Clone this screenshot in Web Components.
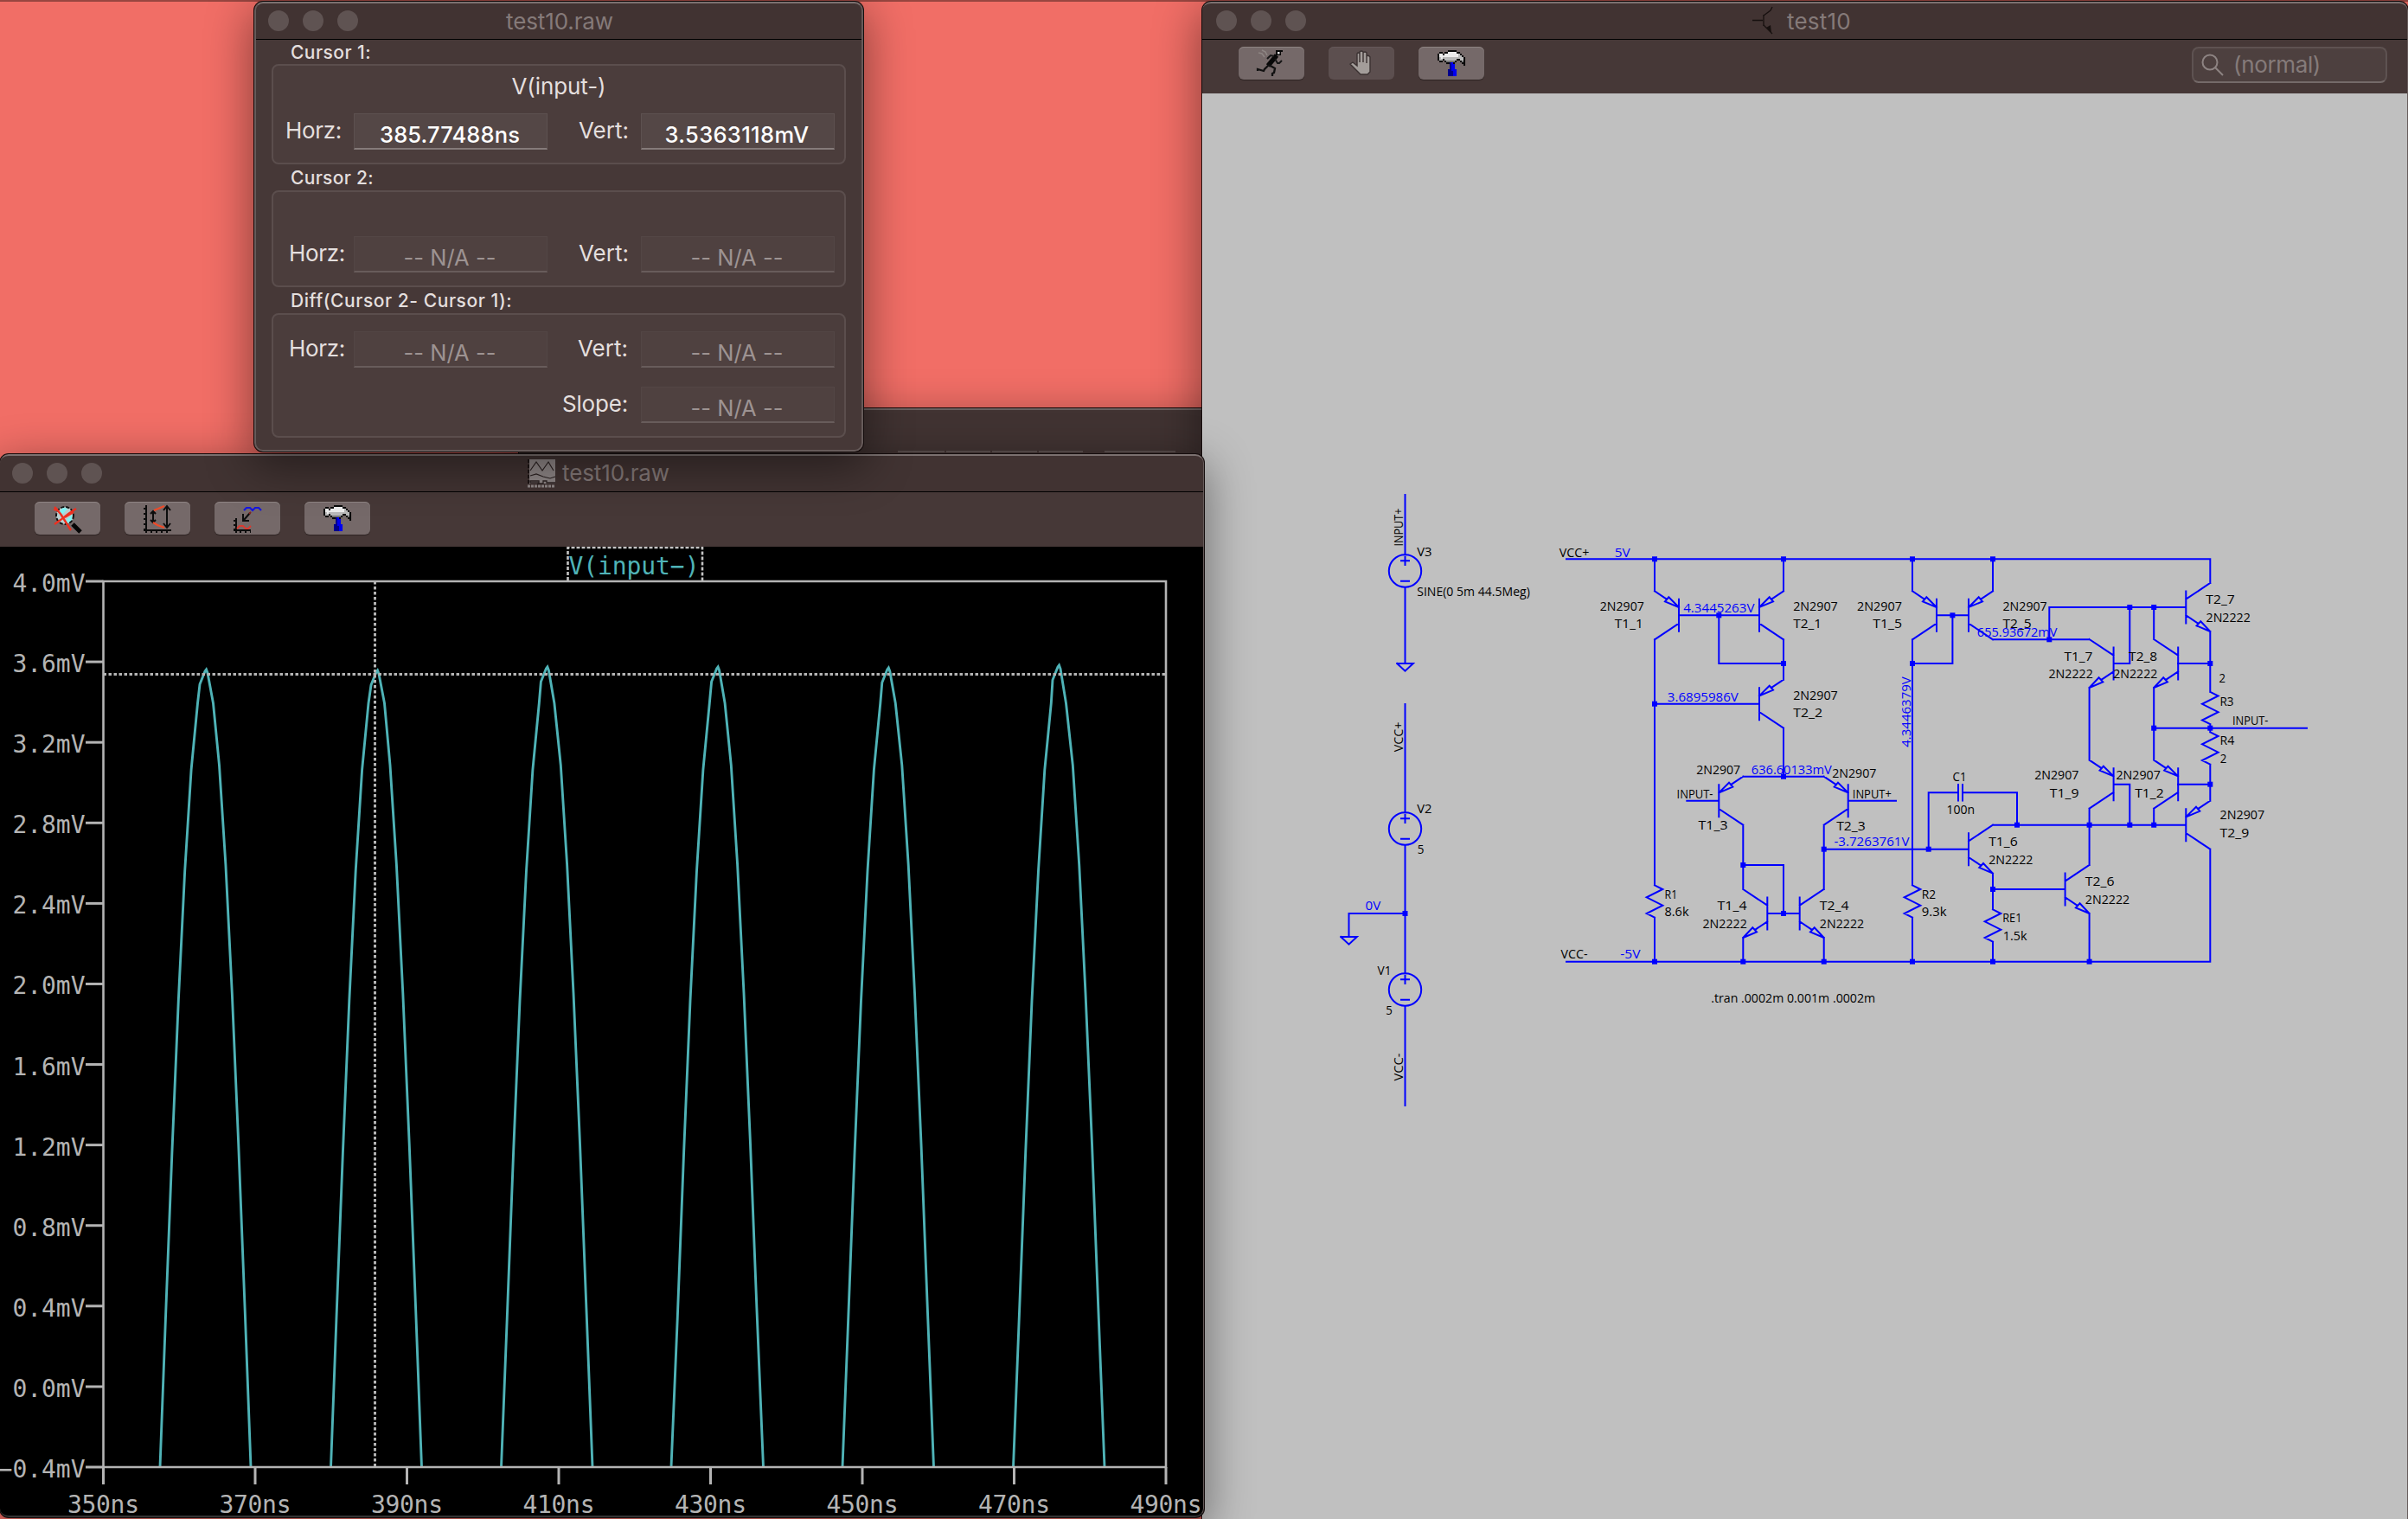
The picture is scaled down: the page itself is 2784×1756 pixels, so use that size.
<!DOCTYPE html>
<html lang="en">
<head>
<meta charset="utf-8">
<title>test10</title>
<style>
html,body{margin:0;height:100%;overflow:hidden;background:#f16e66}
</style>
</head>
<body>
<spice-desktop></spice-desktop>
<script>
const UI = 'Inter,"Liberation Sans",sans-serif';
function define(name, css, html, setup) {
  customElements.define(name, class extends HTMLElement {
    connectedCallback() {
      if (this.shadowRoot) return;
      const root = this.attachShadow({ mode: 'open' });
      root.innerHTML = `<style>*{box-sizing:border-box}${css}</style>` + (typeof html === 'function' ? html(this) : html);
      if (setup) setup(this, root);
    }
  });
}

/* Text spaced to an exact advance width */
define('fit-text', `:host{display:inline-block;white-space:pre}span{display:inline-block}`,
  el => `<span>${el.getAttribute('text')}</span>`,
  (el, root) => {
    const s = root.querySelector('span'), w = +el.getAttribute('w');
    el.style.width = w + 'px';
    const natural = s.getBoundingClientRect().width;
    if (natural) s.style.letterSpacing = ((w - natural) / el.getAttribute('text').length) + 'px';
  });

/* Icons */
const HAMMER = [
'......KKKKK.....','.KK.KKWWWWWKK...','KWWKWWWWWWWWGK..','KWWWWWWWWWWWGGK.','KGWGGGGGGGGGGGGK','KGGKGGGGGGGKKGGK',
'.KK.KDDDDDK..KDK','.....KKNBK....KK','.......NBB.....K','.......NBB......','.......NBB......','......NNBBB.....','......NNNBB.....','......NNNBB.....','......NNNBB.....'];
const PAL = {K:'#0a0a0a',W:'#ececec',G:'#b9b9b9',D:'#777',N:'#00008c',B:'#0000f0'};
const pixels = rows => rows.map((r,y)=>[...r].map((c,x)=>PAL[c]?`<rect x="${x*2}" y="${y*2}" width="2.05" height="2.05" fill="${PAL[c]}"/>`:'').join('')).join('');
const S = (d,c='#0c0c0c',w=2,extra='') => `<path d="${d}" fill="none" stroke="${c}" stroke-width="${w}" ${extra}/>`;
const ICONS = {
  hammer: pixels(HAMMER),
  zoom: `<circle cx="13" cy="12" r="10" fill="#b9cfd0" stroke="#111" stroke-width="2" stroke-dasharray="4 2"/><path d="M6 8l5-5 5 1-8 9zM15 17l6-6v6l-5 4z" fill="#7ff5f5"/>`
    + S('M22 22L31 31','#050505',5) + S('M1 2l3 3M2 3L8 10L20 29','#ee3020',2.4) + S('M1 22L8 17L17 10L26 4M0 5l5 1M13 14l10-6','#ee3020',2.2),
  axes: S('M3 0V32M0 29H32') + S('M1 3V29','#0c0c0c',2,'stroke-dasharray="2 4"') + S('M8 31H32','#0c0c0c',2,'stroke-dasharray="2 4"')
    + S('M11 7V20M8 10l3-3l3 3M8 17l3 3l3-3M27 1V26M23 6l4-5l4 5M23 21l4 5l4-5') + S('M12 6L17 4L24 1M11 20L16 23L24 26','#ee4a28',2.2),
  drop: S('M12 6L15 3H19L22 6L25 3H29L32 6','#1616e0',2.2) + S('M19 9L12 17M11 10V18H18') + S('M18 10l2-2','#802020')
    + S('M3 15V32M0 29H20') + S('M1 17V29','#0c0c0c',2,'stroke-dasharray="2 3"') + S('M7 31H20','#0c0c0c',2,'stroke-dasharray="2 4"') + S('M4 27L7 24H11L14 27H17L20 24','#d83a30',2),
  run: `<path d="M21 0H29V2H27V6H21z" fill="#080808"/><rect x="23" y="2" width="2.5" height="2.5" fill="#ddd"/>` + S('M22 6L12 18','#080808',5.5) + S('M20 10L23 15H25L28 12M19 7L15 6L11 10','#161616',2)
    + S('M13 17L8 22L7 24L0 22V24M13 17L20 21L19 26L17 27V30','#111',2.3) + S('M1 3L5 4L8 8M5 0L9 2L11 6','#8d8583',1.6),
  hand: `<path d="M9 25L0 16L3 14L8 18V4Q9 2 11 4V14V2Q13 0 15 2V14V3Q17 1 19 3V15V7Q21 5 23 8V25L20 28H12z" fill="#a39d9a" stroke="#3b3232" stroke-width="1.4"/>`,
  bjt: S('M0 15.500H12M13 9V22','#17100f',1.3) + S('M13 10L21 4L23 0M13 21L20 28L23 31','#17100f',1.3) + `<path d="M22 30L16 24L21 21z" fill="#17100f"/>`,
  doc: `<rect x="2" width="30" height="28" fill="#8f8787"/>` + S('M1 0V32','#1c1414',2,'stroke-dasharray="4 2"') + S('M3 13L10 3L17 13L24 3L30 13M3 19L10 17L18 20L26 22L32 20','#2c2222',1.2)
    + S('M3 27H12V30M3 27V25H13V28H18V25H22V27H32','#2c2222',1.3) + S('M0 31H32','#8f8787',3,'stroke-dasharray="3 1"'),
  search: `<circle cx="10" cy="10" r="8.500" fill="none" stroke="#8d8382" stroke-width="2"/>` + S('M16 16L25 25','#8d8382',2)
};
define('tool-icon', `:host{display:block;width:32px;height:32px}svg{display:block;overflow:visible}`,
  el => `<svg width="32" height="32" viewBox="0 0 32 32">${ICONS[el.getAttribute('name')]}</svg>`);

define('tool-button', `:host{display:flex;width:76px;height:38px;border-radius:6px;background:#756969;box-shadow:inset 0 1px 0 #8e8483,0 1px 1px rgba(0,0,0,.35);justify-content:center;padding-top:4px}
:host([off]){background:#5c4f4f;box-shadow:inset 0 1px 0 #655959}
:host([icon=hand]) tool-icon{width:26px}`,
  el => `<tool-icon name="${el.getAttribute('icon')}"></tool-icon>`);

define('tool-strip', `:host{display:flex;gap:28px;background:#463837;align-items:flex-start}.sp{flex:1}`, `<slot></slot><div class="sp"></div><slot name="end"></slot>`);

define('search-box', `:host{display:flex;width:226px;height:42px;border-radius:8px;background:#4d403f;border:2px solid #5e5251;border-bottom-color:#746a69;padding:0 0 0 9px;gap:5px;align-items:center;color:#857b7a;font:26px/38px ${UI}}tool-icon{margin-top:6px}`,
  `<tool-icon name="search"></tool-icon><fit-text text="(normal)" w="101"></fit-text>`);

/* Window frame with title bar */
define('app-window', `:host{display:flex;flex-direction:column;position:absolute;border-radius:10px;overflow:hidden;background:#463837;box-shadow:0 0 0 1px #140c0c,0 14px 52px 4px rgba(0,0,0,.42)}
.bar{height:44px;flex:none;display:grid;grid-template-columns:1fr auto 1fr;align-items:center;background:#413332;border-bottom:1px solid #000;color:#857a79;font:26px/42px ${UI}}
.lights{display:flex;gap:16px;padding-left:var(--lights,16px)}.lights i{width:24px;height:24px;border-radius:50%;background:#5f5352}
.title{display:flex;gap:8px;align-items:center;position:relative;left:var(--shift,1px)}
.title fit-text{padding-top:var(--drop,2px)}
.rim{position:absolute;inset:0;border-radius:10px;border:2px solid #665b5a;border-top-color:#7b7170;pointer-events:none}
:host([flat]) .rim{border-width:2px 1px 2px 0;border-bottom-color:#333}
slot{display:contents}`,
  el => `<div class="bar"><div class="lights"><i></i><i></i><i></i></div><div class="title">${el.getAttribute('icon')?`<tool-icon name="${el.getAttribute('icon')}"></tool-icon>`:''}<fit-text text="${el.getAttribute('heading')}" w="${el.getAttribute('tw')}"></fit-text></div><div></div></div><slot></slot><div class="rim"></div>`);

/* Cursor readout */
define('value-field', `:host{display:block;width:224px;height:42px;background:#544746;border:1px solid #5d5150;border-bottom:2px solid #857b7a;text-align:center;color:#fff;font:500 25.5px/41px ${UI};padding:3px 2px 0 0}
:host([off]){background:#4f4140;border-color:#534645;border-bottom-color:#685c5b;color:#9d9392;font-weight:400}`,
  el => `<fit-text text="${el.getAttribute('value')}" w="${el.getAttribute('w')}"></fit-text>`);
define('field-label', `:host{display:block;height:42px;text-align:right;color:#e4dfde;font:26px/40px ${UI}}`,
  el => `<fit-text text="${el.getAttribute('text')}" w="${el.getAttribute('w')}"></fit-text>`);
define('readout-row', `:host{display:flex;height:42px}field-label.a{width:93px;padding-right:var(--pa,10px)}field-label.b{width:108px;padding-right:var(--pb,14px)}.gap{width:317px}`,
  el => {
    const g = n => el.getAttribute(n), off = g('h') === '385.77488ns' ? '' : 'off';
    const first = g('h') ? `<field-label class="a" text="Horz:" w="65"></field-label><value-field ${off} value="${g('h')}" w="${g('hw')}"></value-field>` : '<div class="gap"></div>';
    return first + `<field-label class="b" text="${g('l')||'Vert:'}" w="${g('lw')||58}"></field-label><value-field ${off} value="${g('v')}" w="${g('vw')}"></value-field>`;
  });
define('readout-group', `:host{display:block;margin:0 20px}.cap{height:var(--cap,30px);padding:1px 0 0 22px;color:#e4dfde;font:500 21px/var(--cap,30px) ${UI}}
.box{height:var(--h);border:2px solid #5b4e4d;border-radius:8px;background:#4b3d3c;padding-top:var(--pt);display:flex;flex-direction:column}`,
  el => `<div class="cap"><fit-text text="${el.getAttribute('caption')}" w="${el.getAttribute('w')}"></fit-text></div><div class="box"><slot></slot></div>`);
define('cursor-panel', `:host{display:block}.trace{height:55px;text-align:center;color:#e4dfde;font:26px/47px ${UI}}`,
 `<readout-group caption="Cursor 1:" w="93" style="--cap:28px;--h:116px;--pt:0"><div class="trace"><fit-text text="V(input-)" w="109"></fit-text></div><readout-row h="385.77488ns" hw="162" v="3.5363118mV" vw="167" style="--pa:14px"></readout-row></readout-group>
  <readout-group caption="Cursor 2:" w="96" style="--h:112px;--pt:51px"><readout-row h="-- N/A --" hw="107" v="-- N/A --" vw="107"></readout-row></readout-group>
  <readout-group caption="Diff(Cursor 2- Cursor 1):" w="256" style="--h:144px;--pt:19px"><readout-row h="-- N/A --" hw="107" v="-- N/A --" vw="107" style="--pb:15px"></readout-row><readout-row l="Slope:" lw="76" v="-- N/A --" vw="107" style="--pb:15px;margin-top:22px"></readout-row></readout-group>`);

/* Waveform plot; drawing coordinates are screen pixels */
define('wave-plot', `:host{display:block;flex:1;background:#000}svg{display:block}text{font-family:"DejaVu Sans Mono",monospace;font-size:28px;fill:#b4b4b4}`, () => {
  const L=119.5,R=1348,T=672,B=1696; let o='';
  const ln=(x1,y1,x2,y2,w=2,e='')=>`<path d="M${x1} ${y1}L${x2} ${y2}" stroke="#b4b4b4" stroke-width="${w}" ${e}/>`;
  for(let i=0;i<12;i++){const y=T+(B-T)/11*i;o+=ln(99,y,L,y,3);
    const s=(4-.4*i).toFixed(1), t=(i===11?'−0.4':s.replace('-',''))+'mV';
    o+=`<text x="98.500" y="${y+12}" text-anchor="end" textLength="${t.length*16.8}">${t}</text>`;}
  for(let i=0;i<8;i++){const x=L+(R-L)/7*i;o+=ln(x,B,x,1716,3);o+=`<text x="${x}" y="1748.500" text-anchor="middle" textLength="83">${350+20*i}ns</text>`;}
  [[185,290,774],[382.5,487.5,775],[579.5,685,771],[776,882.5,771],[974,1079.5,772],[1171.5,1277,769]].forEach(([l,r,p],k)=>{
    const c=(l+r)/2, Y=v=>T+(4-v)/4.4*(B-T), f=d=>3.57*Math.cos(2*Math.PI*d/197.2)-.03, pk=238.500+197.2*k+(k===1?.8:0);
    let pts=[[l,B]];for(let d=-46;d<-9;d+=7.4)pts.push([c+d,Y(f(d))]);
    pts.push([pk-7.5,p+17],[pk-1.5,p+2],[pk,p],[pk+1.5,p+4],[pk+8,Y(f(9))]);
    for(let d=16;d<50;d+=7.4)pts.push([c+d,Y(f(d))]);pts.push([r,B]);
    o+=`<polyline points="${pts.map(q=>q.map(n=>n.toFixed(1)).join()).join(' ')}" fill="none" stroke="#4fb3b7" stroke-width="2.9"/>`;});
  o+=`<path d="M${L} ${T}H${R}V${B}H${L}Z" fill="none" stroke="#b4b4b4" stroke-width="2.6"/>`;
  o+=ln(L,779.5,R,779.5,3,'stroke-dasharray="3.500 2.500"')+ln(433.5,T,433.5,B,3,'stroke-dasharray="3.500 2.500"');
  o+=`<path d="M656.5 671V633H812V671" fill="none" stroke="#c4c4c4" stroke-width="2.600" stroke-dasharray="4 2"/>`;
  o+=`<text x="657.5" y="664" textLength="151" style="fill:#4fb3b7">V(input−)</text>`;
  return `<svg width="1392" height="1122" viewBox="0 632 1392 1122">${o}</svg>`;
});

/* Circuit; drawing coordinates are screen pixels */
define('circuit-sheet', `:host{display:block;flex:1;background:#c0c0c0;box-shadow:inset 1px 0 0 #dadada}svg{display:block}text{font-family:"Open Sans","Noto Sans",sans-serif;font-size:14px;font-weight:500;fill:#000}.b{fill:#00f}`, () => {
  let d='', o='';
  const w=(...p)=>{d+='M'+p.map((n,i)=>n+(i%2?'L':' ')).join('').replace(/L$/,'');};
  const node=(x,y)=>{o+=`<rect x="${x-3}" y="${y-3}" width="6" height="6" fill="#00f"/>`;};
  const bjt=(x,y,s,pnp)=>{const b=x+s*28;w(b,y-18.5,b,y+18.5);w(b,y,b+s*9,y);
    if(pnp){w(x,y-28,b-s*13.8,y-18.5);w(b,y-9.3,b-s*16,y-16,b-s*11.7,y-21,b,y-9.3);w(b,y+9.3,x,y+28);}
    else{w(x,y-28,b,y-9.3);w(b,y+9.3,x+s*13.8,y+18.8);w(x,y+28,x+s*11,y+16.3,x+s*15.7,y+21.3,x,y+28);}};
  const res=(x,y)=>w(x,y-18.7,x+9.3,y-14,x-9.3,y-4.7,x+9.3,y+4.7,x-9.3,y+14,x,y+18.7);
  const src=y=>{o+=`<circle cx="1624.500" cy="${y}" r="18.700" fill="none" stroke="#00f" stroke-width="2"/>`;w(1620,y-11.7,1629,y-11.7);w(1624.5,y-16.3,1624.5,y-7);w(1620,y+11.7,1629,y+11.7);};
  const gnd=(x,y)=>w(x-9.3,y,x+9.3,y,x,y+8.7,x-9.3,y);
  w(1624.5,572,1624.5,641);src(660);w(1624.5,679,1624.5,767);gnd(1624.5,767);
  w(1624.5,814,1624.5,939);src(958);w(1624.5,977,1624.5,1125);src(1144);w(1624.5,1163,1624.5,1278);
  w(1624.5,1056,1559.5,1056,1559.5,1083);gnd(1559.5,1083);node(1624.5,1056);
  w(1811,646.3,2555.3,646.3,2555.3,674);w(1811,1111.7,2555.3,1111.7,2555.3,981.7);
  bjt(1913,711.3,1,1);bjt(2062,711.3,-1,1);bjt(2062,813.7,-1,1);bjt(2015.3,925.7,-1,1);bjt(2108.7,925.7,1,1);
  bjt(2015.3,1056,1,0);bjt(2108.7,1056,-1,0);bjt(2211,711.3,1,1);bjt(2304,711.3,-1,1);bjt(2555.3,702,-1,0);
  bjt(2415.6,767,1,0);bjt(2490.2,767,1,0);bjt(2415.6,906.7,1,1);bjt(2490.2,906.7,1,1);bjt(2555.3,953.7,-1,1);
  bjt(2304,981.7,-1,0);bjt(2415.6,1028,-1,0);
  res(1913,1042);res(2211,1042);res(2304,1070);res(2555.3,818.5);res(2555.3,865);
  w(1913,646.3,1913,683.3);w(2062,646.3,2062,683.3);w(1941,711.3,2034,711.3);w(1987.3,711.3,1987.3,767,2062,767);w(2062,739.3,2062,785.7);
  w(1913,739.3,1913,1023.3);w(1913,813.7,2034,813.7);w(1913,1060.7,1913,1111.7);w(2062,841.7,2062,897.7);w(2015.3,897.7,2108.7,897.7);
  w(1950.3,925.7,1987.3,925.7);w(2136.7,925.7,2192,925.7);w(2015.3,953.7,2015.3,1028);w(2015.3,1000,2062,1000,2062,1056);w(2043.3,1056,2080.7,1056);
  w(2108.7,953.7,2108.7,1028);w(2108.7,981.7,2276,981.7);w(2015.3,1084,2015.3,1111.7);w(2108.7,1084,2108.7,1111.7);
  w(2211,646.3,2211,683.3);w(2304,646.3,2304,683.3);w(2239,711.3,2276,711.3);w(2257.4,711.3,2257.4,767,2211,767);w(2211,739.3,2211,1023.3);w(2211,1060.7,2211,1111.7);
  w(2304,739.3,2415.6,739.3);w(2369.3,739.3,2369.3,702,2527,702);w(2462.3,702,2462.3,767,2443.6,767);w(2490.2,702,2490.2,739);w(2518,767,2555.3,767);
  w(2555.3,730,2555.3,799.8);w(2555.3,837.2,2555.3,846.3);w(2555.3,883.7,2555.3,925.7);w(2490.2,841.7,2667,841.7);
  w(2415.6,795,2415.6,878.7);w(2490.2,795,2490.2,878.7);w(2518,906.7,2555.3,906.7);w(2415.6,934.7,2415.6,1000);w(2490.2,934.7,2490.2,953.7);
  w(2443.6,906.7,2462.3,906.7,2462.3,953.7);w(2304,953.7,2527,953.7);w(2332,953.7,2332,916.3,2269,916.3);w(2269,907,2269,925.5);w(2264,907,2264,925.5);
  w(2264,916.3,2229.7,916.3,2229.7,981.7);w(2304,1009.7,2304,1051.3);w(2304,1088.7,2304,1111.7);w(2304,1028,2387,1028);w(2415.6,1056,2415.6,1111.7);
  [[1913,646.3],[2062,646.3],[2211,646.3],[2304,646.3],[1987.3,711.3],[2062,767],[1913,813.7],[2062,897.7],[2015.3,1000],[2108.7,981.7],[2062,1056],
   [1913,1111.7],[2015.3,1111.7],[2108.7,1111.7],[2211,1111.7],[2304,1111.7],[2415.6,1111.7],[2257.4,711.3],[2211,767],[2369.3,739.3],[2462.3,702],[2490.2,702],
   [2555.3,767],[2490.2,841.7],[2555.3,841.7],[2555.3,906.7],[2332,953.7],[2415.6,953.7],[2462.3,953.7],[2490.2,953.7],[2229.7,981.7],[2304,1028]].forEach(p=>node(...p));
  const t=(x0,x1,y,s,b)=>{o+=`<text x="${x0-.5}" y="${y+.4}" textLength="${x1-x0+1}" lengthAdjust="spacingAndGlyphs" ${b?'class="b"':''}>${s}</text>`;};
  const v=(x,y0,y1,s,b)=>{o+=`<text transform="translate(${x} ${y1+.5})rotate(-90)" textLength="${y1-y0+1}" lengthAdjust="spacingAndGlyphs" ${b?'class="b"':''}>${s}</text>`;};
  v(1622.3,588,631,'INPUT+');v(1622.3,835,868.7,'VCC+');v(1622.3,1218,1249,'VCC-');v(2208.5,782.7,863.3,'4.3446379V',1);
  t(1638.7,1655,643,'V3');t(1638.7,1768.3,689,'SINE(0 5m 44.5Meg)');t(1638.7,1655,940,'V2');t(1639.3,1646,987,'5');t(1579,1595.7,1051.6,'0V',1);t(1593,1608,1126.6,'V1');t(1602.7,1609.3,1173,'5');
  t(1803.3,1837,643.3,'VCC+');t(1867.3,1884.3,643.3,'5V',1);
  t(1850.3,1900.3,705.3,'2N2907');t(1867.3,1899.3,726,'T1_1');t(2073.7,2124.3,705.3,'2N2907');t(2073.7,2105.7,726,'T2_1');
  t(2147.6,2198.5,705.3,'2N2907');t(2165.8,2198.5,726,'T1_5');t(2316,2366.2,705.3,'2N2907');t(2316,2348.3,726,'T2_5');
  t(1946.7,2028,708,'4.3445263V',1);t(1928.3,2009.3,810.3,'3.6895986V',1);t(2073.7,2124.3,808.3,'2N2907');t(2073.7,2106.7,829,'T2_2');
  t(1961.7,2011.7,895,'2N2907');t(2025.3,2117.3,894.3,'636.60133mV',1);t(2118.7,2169,899,'2N2907');t(1939,1980,922.3,'INPUT-');t(2142.3,2186.3,922.3,'INPUT+');
  t(1964,1997,958.3,'T1_3');t(2123.7,2156.3,960,'T2_3');t(2121,2207,978,'-3.7263761V',1);t(1925,1938.7,1038.3,'R1');t(1925,1952,1059,'8.6k');
  t(1986,2019,1052,'T1_4');t(1969,2019.3,1072.7,'2N2222');t(2104.3,2137,1052,'T2_4');t(2104.3,2154.7,1072.7,'2N2222');t(1805,1835,1108,'VCC-');t(1873.7,1896,1108,'-5V',1);
  t(1978.7,2167.7,1159,'.tran .0002m 0.001m .0002m');
  t(2286.3,2378,736,'655.93672mV',1);t(2550.8,2583.2,698,'T2_7');t(2551,2601.4,719,'2N2222');t(2386.9,2419,764,'T1_7');t(2369,2419.3,784,'2N2222');
  t(2461.6,2493.7,764,'T2_8');t(2443.7,2494,784,'2N2222');t(2566,2572.5,789,'2');t(2567,2582.1,815.3,'R3');t(2581.5,2622,838,'INPUT-');t(2567,2582.8,861,'R4');t(2567.3,2573.9,882,'2');
  t(2258,2273,903,'C1');t(2251,2282.7,940.3,'100n');t(2352.7,2403,901,'2N2907');t(2370.3,2403,922,'T1_9');t(2447,2497.3,900.3,'2N2907');t(2468.7,2501.3,922,'T1_2');
  t(2567,2617.7,947,'2N2907');t(2567,2599.7,968,'T2_9');t(2299.7,2332.3,978,'T1_6');t(2299.7,2350,998.7,'2N2222');t(2411.3,2444,1024,'T2_6');t(2411.3,2461.7,1045,'2N2222');
  t(2222.3,2237.7,1038.3,'R2');t(2222.3,2250,1059,'9.3k');t(2315.7,2337,1066,'RE1');t(2316.3,2343,1087,'1.5k');
  return `<svg width="1394" height="1648" viewBox="1390 108 1394 1648"><path d="${d}" fill="none" stroke="#0000ff" stroke-width="2" stroke-linecap="square"/>${o}</svg>`;
});

define('spice-desktop', `:host{display:block;position:relative;width:2784px;height:1756px;overflow:hidden;background:#f16e66}
.edge{height:2px;background:#984640}
.back{position:absolute;left:600px;top:472px;width:900px;height:300px;background:#413332;border-top:2px solid #6b605f;box-shadow:0 0 0 1px #140c0c,0 0 40px rgba(0,0,0,.25)}
.back div{display:flex;gap:2px;padding:47px 0 0 438px}.back i{height:2px;background:#5b4f4e}
.sheet{left:1390px;top:2px;width:1394px;height:1764px;--lights:16px;--shift:-4px}
.scope{left:0;top:525px;width:1392px;height:1229px;--lights:14px;--shift:-4px;--drop:1px}
.dialog{left:294px;top:2px;width:704px;height:520px}
.s1{height:63px;padding:11px 40px 0}.s2{height:62px;padding:8px 24px 0 42px}`,
`<div class="edge"></div>
<div class="back"><div><i style="width:54px"></i><i style="width:51px"></i><i style="width:52px"></i><i style="width:51px"></i><i style="width:82px;margin-left:23px"></i></div></div>
<app-window class="sheet" flat heading="test10" tw="74" icon="bjt">
 <tool-strip class="s2"><tool-button icon="run"></tool-button><tool-button icon="hand" off></tool-button><tool-button icon="hammer"></tool-button><search-box slot="end"></search-box></tool-strip>
 <circuit-sheet></circuit-sheet></app-window>
<app-window class="scope" flat heading="test10.raw" tw="124" icon="doc">
 <tool-strip class="s1"><tool-button icon="zoom"></tool-button><tool-button icon="axes"></tool-button><tool-button icon="drop"></tool-button><tool-button icon="hammer"></tool-button></tool-strip>
 <wave-plot></wave-plot></app-window>
<app-window class="dialog" heading="test10.raw" tw="124"><cursor-panel></cursor-panel></app-window>`);
</script>
</body>
</html>
